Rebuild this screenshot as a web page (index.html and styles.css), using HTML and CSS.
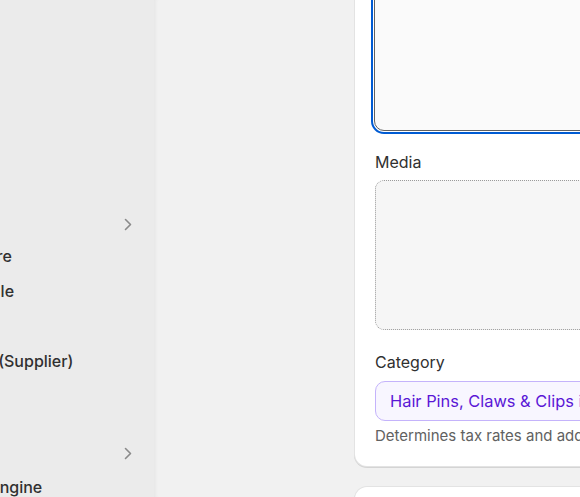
FILE: index.html
```html
<!DOCTYPE html>
<html lang="en">
<head>
  <meta charset="UTF-8">
  <meta name="viewport" content="width=device-width, initial-scale=1.0">
  <title>Add product</title>
  <link rel="stylesheet" href="styles.css">
</head>
<body>
<div class="frame">

  <nav class="sidebar">
    <div class="nav-inner">
      <div class="nav-head nav-first">
        <span>Sales</span>
        <svg class="chev" width="8" height="13" viewBox="0 0 8 13"><path d="M1.5 1.5l5 5-5 5" fill="none" stroke="#8a8a8a" stroke-width="1.6" stroke-linecap="round" stroke-linejoin="round"/></svg>
      </div>
      <div class="nav-item"><a href="#">Online Store</a></div>
      <div class="nav-item"><a href="#">Point of Sale</a></div>
      <div class="nav-item"><a href="#">Shop</a></div>
      <div class="nav-item"><a href="#">Collective (Supplier)</a></div>
      <div class="nav-item"><a href="#">Inbox</a></div>

      <div class="nav-head nav-gap">
        <span>Apps</span>
        <svg class="chev" width="8" height="13" viewBox="0 0 8 13"><path d="M1.5 1.5l5 5-5 5" fill="none" stroke="#8a8a8a" stroke-width="1.6" stroke-linecap="round" stroke-linejoin="round"/></svg>
      </div>
      <div class="nav-item nav-indent"><a href="#">Search Engine</a></div>
    </div>
  </nav>

  <main class="main">
    <section class="card">
      <textarea class="desc" id="description"></textarea>

      <label class="field-label">Media</label>
      <div class="dropzone"></div>

      <label class="field-label cat-label" for="category">Category</label>
      <div class="category" id="category">Hair Pins, Claws &amp; Clips in Hair Accessories</div>
      <p class="help">Determines tax rates and adds metafields to improve search, filters, and cross-channel sales</p>
    </section>

    <section class="card next-card"></section>
  </main>

</div>
</body>
</html>
```

FILE: styles.css
```css
body {
  margin: 0;
  background-color: #f1f1f1;
  font-family: Inter, "Noto Sans", sans-serif;
  color: #303030;
  overflow: hidden;
}

.frame {
  display: flex;
  height: 497px;
  overflow: hidden;
}

/* left nav, scrolled so labels run off the edge */
.sidebar {
  width: 154px;
  flex-shrink: 0;
  background-color: #ebebeb;
}

.nav-inner {
  margin-left: -82px;
  padding: 203px 22px 0 0;
}

.nav-head,
.nav-item {
  height: 35px;
  display: flex;
  align-items: center;
  justify-content: space-between;
}

.nav-head span {
  font-size: 13px;
  font-weight: 600;
  color: #616161;
}

.nav-head .chev {
  margin-top: 4px;
}

.nav-first .chev {
  margin-top: 7px;
}

.nav-gap {
  margin-top: 21px;
}

.nav-indent {
  padding-left: 14px;
}

.nav-item a {
  color: #303030;
  text-decoration: none;
  font-size: 16px;
  font-weight: 500;
  white-space: nowrap;
}

.main {
  flex: 1;
  padding-left: 201px;
  box-shadow: inset 4px 0 4px -3px rgba(0, 0, 0, 0.06);
}

.card {
  width: 330px;
  margin-top: -160px;
  padding: 20px;
  background-color: #fff;
  border-radius: 12px;
  box-shadow: 0 0 0 1px #e3e3e3, 0 1px 0 1px #d4d4d4;
}

.desc {
  display: block;
  width: 100%;
  height: 271px;
  margin: 0 0 0 -1px;
  box-sizing: border-box;
  border: 1px solid #616161;
  border-radius: 10px;
  background-color: #fafafa;
  outline: 2px solid #005bd3;
  outline-offset: 1px;
  resize: none;
}

.field-label {
  display: block;
  margin-top: 21px;
  font-size: 16px;
  line-height: 20px;
}

.dropzone {
  height: 150px;
  margin-top: 8px;
  box-sizing: border-box;
  border: 1px dotted #9a9a9a;
  border-radius: 9px;
  background-color: #f6f6f6;
}

.cat-label {
  margin-top: 22px;
}

.category {
  height: 40px;
  margin-top: 9px;
  box-sizing: border-box;
  padding: 0 14px;
  display: flex;
  align-items: center;
  border: 1px solid #c4b3fb;
  border-radius: 10px;
  background-color: #f8f6ff;
  color: #5a16d6;
  font-size: 16.4px;
  line-height: 20px;
  white-space: nowrap;
  overflow: hidden;
}

.help {
  margin: 5px 0 0;
  font-size: 15px;
  line-height: 20px;
  color: #616161;
  white-space: nowrap;
}

.next-card {
  margin-top: 21px;
  height: 200px;
}
```
